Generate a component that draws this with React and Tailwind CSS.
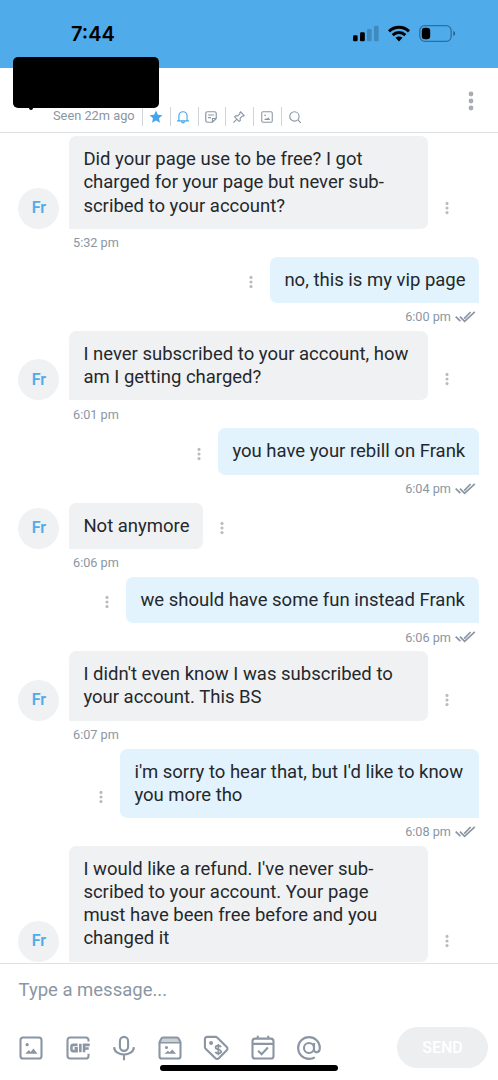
import React from 'react';

const messages = [
  { lines: ['Did your page use to be free? I got', 'charged for your page but never sub-', 'scribed to your account?'], time: '5:32 pm', w: 'w-[359px]' },
  { mine: true, lines: ['no, this is my vip page'], time: '6:00 pm', w: 'w-[209px]' },
  { lines: ['I never subscribed to your account, how', 'am I getting charged?'], time: '6:01 pm', w: 'w-[359px]' },
  { mine: true, lines: ['you have your rebill on Frank'], time: '6:04 pm', w: 'w-[261px]' },
  { lines: ['Not anymore'], time: '6:06 pm', w: 'w-[134px]' },
  { mine: true, lines: ['we should have some fun instead Frank'], time: '6:06 pm', w: 'w-[353px]' },
  { lines: ["I didn't even know I was subscribed to", 'your account. This BS'], time: '6:07 pm', w: 'w-[359px]' },
  { mine: true, lines: ["i'm sorry to hear that, but I'd like to know", 'you more tho'], time: '6:08 pm', w: 'w-[359px]' },
  { lines: ["I would like a refund. I've never sub-", 'scribed to your account. Your page', 'must have been free before and you', 'changed it'], time: '6:10 pm', w: 'w-[359px]', last: true },
];

function Dots({ className }) {
  return (
    <svg viewBox="0 0 4 14" className={className} fill="currentColor">
      <circle cx="2" cy="2.4" r="1.55" />
      <circle cx="2" cy="7" r="1.55" />
      <circle cx="2" cy="11.6" r="1.55" />
    </svg>
  );
}

function Checks() {
  return (
    <svg viewBox="0 0 21 12" className="h-3 w-[21px]" fill="none" stroke="currentColor" strokeWidth="1.7">
      <path d="M.7 5.6 5.4 10.2M5 5.6l4.6 4.700L19.800.8M9.200 7.600 15.600 1" />
    </svg>
  );
}

function Message({ mine, lines, time, w, last }) {
  const dots = <Dots className="mb-[14px] h-[14px] w-1 shrink-0 text-[#b8bcc2]" />;
  return (
    <div className="shrink-0">
      <div className={mine ? 'flex items-end justify-end gap-[17px] pr-[18.600px]' : 'flex items-end gap-[16.600px] pl-[18.400px]'}>
        {mine && dots}
        {!mine && (
          <div className="-mr-[6.600px] flex size-[41px] shrink-0 items-center justify-center rounded-full bg-[#f0f1f3] text-[16px] font-semibold text-[#4faceb]">Fr</div>
        )}
        <div className={`${w} shrink-0 px-[14px] pt-[12.05px] pb-[11.05px] text-[18.5px] leading-[23.15px] whitespace-nowrap text-[#24282c] ${mine ? 'rounded-[7px] rounded-br-none bg-[#e2f3fd]' : 'rounded-[7px] rounded-bl-none bg-[#f0f1f3]'}`}>
          {lines.map((l) => <div key={l}>{l}</div>)}
        </div>
        {!mine && dots}
      </div>
      {!last && (
        <div className={`flex h-[28px] items-center text-[12.7px] text-[#8a96a3] ${mine ? 'justify-end gap-1 pr-[22px]' : 'pl-[73px]'}`}>
          <span>{time}</span>
          {mine && <Checks />}
        </div>
      )}
    </div>
  );
}

function Picture({ className }) {
  return (
    <svg viewBox="0 0 24 24" className={className} fill="none" stroke="currentColor" strokeWidth="1.8">
      <rect x="3" y="3" width="18" height="18" rx="2.2" />
      <circle cx="8.7" cy="9.2" r="1.4" fill="currentColor" stroke="none" />
      <path d="M7 17h10.5l-3.4-4.6-2.4 3-1.5-1.6z" fill="currentColor" stroke="none" />
    </svg>
  );
}

const tool = 'size-[28px]';

export default function App() {
  return (
    <div className="relative flex h-[1080px] w-[498px] flex-col overflow-hidden bg-white font-['Roboto',sans-serif]">
      <div className="flex h-[68px] shrink-0 items-start justify-between bg-[#4fabea] pt-[20px] pr-[42.500px] pl-[71px] text-black">
        <div className="font-['Inter',sans-serif] text-[20px] leading-7 font-semibold">7:44</div>
        <div className="flex items-center gap-[9px] pt-[5px]">
          <svg viewBox="0 0 26 17" className="h-[17px] w-[26px]">
            <rect x="0" y="10.3" width="4.6" height="6" rx="1.3" />
            <rect x="7" y="7.3" width="4.8" height="9" rx="1.3" />
            <rect x="14" y="4" width="4.6" height="12.3" rx="1.3" fill="#3e89bd" />
            <rect x="21" y="0.7" width="4.6" height="15.6" rx="1.3" fill="#3e89bd" />
          </svg>
          <svg viewBox="0 0 22 17" className="h-[17px] w-[22px]" fill="none" stroke="#000" strokeWidth="3">
            <path d="M1 6.3C6.7.9 15.3.9 21 6.3" />
            <path d="M4.7 10.1C8.3 6.7 13.7 6.7 17.3 10.1" />
            <path d="M7.5 12.8c2-1.9 5-1.9 7 0L11 16.4z" fill="#000" stroke="none" />
          </svg>
          <svg viewBox="0 0 37 17" className="h-[17px] w-[37px]">
            <rect x=".8" y=".7" width="31.4" height="15.6" rx="5" fill="none" stroke="#2f6f9d" strokeWidth="1.3" />
            <rect x="2.8" y="2.8" width="8.4" height="11.4" rx="3.3" />
            <path d="M34.4 6c2.2.8 2.2 4.2 0 5z" fill="#235a80" />
          </svg>
        </div>
      </div>

      <div className="relative flex h-[65px] shrink-0 items-end border-b border-[#dfe2e5] pb-[6px] pl-[53px] text-[#8a96a3]">
        <div className="w-[89px] text-[12.8px] leading-[20px] whitespace-nowrap">Seen 22m ago</div>
        <div className="flex h-[19px] items-center [&>div]:flex [&>div]:h-[19px] [&>div]:w-[27.8px] [&>div]:items-center [&>div]:justify-center [&>div]:border-l [&>div]:border-[#cfd4d9] [&>div]:pr-[1.5px]">
          <div>
            <svg viewBox="0 0 24 24" className="size-[14px]" fill="#45a7ea"><path d="m12 1 3.2 7.2 7.8.8-5.8 5.2 1.6 7.8L12 18l-6.8 4 1.6-7.8L1 9l7.8-.8z" /></svg>
          </div>
          <div>
            <svg viewBox="0 0 24 24" className="size-[14px] text-[#45a7ea]" fill="none" stroke="currentColor" strokeWidth="2"><path d="M5 18v-8a7 7 0 0 1 14 0v8M1.8 18.5h20.4M9.5 20c.5 2.7 4.5 2.7 5 0" /></svg>
          </div>
          <div>
            <svg viewBox="0 0 24 24" className="size-[14px]" fill="none" stroke="currentColor" strokeWidth="2"><path d="M14.5 21H6a3 3 0 0 1-3-3V6a3 3 0 0 1 3-3h12a3 3 0 0 1 3 3v8.5zM14.5 21v-6.5H21M7 8.5h10M7 13h5" /></svg>
          </div>
          <div>
            <svg viewBox="0 0 24 24" className="size-[14px]" fill="none" stroke="currentColor" strokeWidth="1.9" strokeLinejoin="round"><path d="m14.5 3 6.5 6.5-2 1.2-1.5-.2-3.5 3.5.2 4-2 1.5-7.700-7.700L6 9.800l4 .2 3.500-3.500-.2-1.500zM8 16l-5.500 5.500" /></svg>
          </div>
          <div><Picture className="size-[14px]" /></div>
          <div>
            <svg viewBox="0 0 24 24" className="size-[14px]" fill="none" stroke="currentColor" strokeWidth="1.9"><circle cx="11" cy="11" r="8" /><path d="m17 17 5 5" /></svg>
          </div>
        </div>
        <svg viewBox="0 0 6 20" className="absolute top-[23px] right-[24px] h-5 w-1.5" fill="#a8adb3">
          <circle cx="3" cy="3" r="2.4" /><circle cx="3" cy="10" r="2.4" /><circle cx="3" cy="17" r="2.4" />
        </svg>
        <div className="absolute top-[-11px] left-[12.5px] h-[51px] w-[146.5px] rounded-[5px] bg-black" />
        <div className="absolute top-[38px] left-[29px] h-[4px] w-[4px] rounded-full bg-black" />
      </div>

      <div className="flex h-[830px] shrink-0 flex-col overflow-hidden pt-[3.2px]">
        {messages.map((m, i) => <Message key={i} {...m} />)}
      </div>

      <div className="flex flex-1 flex-col border-t border-[#dfe2e5] text-[#8a96a3]">
        <div className="pt-[14px] pl-[18.500px] text-[18.500px] leading-6">Type a message...</div>
        <div className="flex items-center justify-between pt-[25px] pr-[10px] pl-[17.300px]">
          <div className="flex items-center gap-[18.300px]">
            <Picture className={tool} />
            <svg viewBox="0 0 24 24" className={tool} fill="none" stroke="currentColor" strokeWidth="1.8">
              <path d="M21 6.5V5.200A2.200 2.200 0 0 0 18.800 3H5.200A2.200 2.200 0 0 0 3 5.200v13.600A2.200 2.200 0 0 0 5.200 21h13.600a2.200 2.200 0 0 0 2.200-2.200V17" />
              <path d="M11.600 9.300H8Q6.400 9.300 6.400 10.900v2.200q0 1.600 1.600 1.600h2.800v-2.500H9M14 8.300v7.400M17.200 15.700V9.300h4.800M17.200 12.500h4" strokeWidth="2.200" />
            </svg>
            <svg viewBox="0 0 24 24" className={tool} fill="none" stroke="currentColor" strokeWidth="1.8">
              <rect x="8.5" y="2.500" width="7" height="12" rx="3.500" />
              <path d="M3.500 11.200c.6 8.600 16.400 8.600 17 0M12 17.700v4.700" />
            </svg>
            <svg viewBox="0 0 24 24" className={tool} fill="none" stroke="currentColor" strokeWidth="1.8">
              <path d="M3 7.500h18L19.500 4.200Q19 3 17.800 3H6.200Q5 3 4.500 4.200z" fill="#cbd1d7" stroke="none" />
              <path d="M3 7.500h18" strokeWidth="1.300" />
              <path d="M3 7v12a2 2 0 0 0 2 2h14a2 2 0 0 0 2-2V7l-1.400-2.800A2 2 0 0 0 17.800 3H6.200a2 2 0 0 0-1.800 1.200z" />
              <circle cx="9" cy="11.500" r="1.300" fill="currentColor" stroke="none" />
              <path d="M7.200 17h10l-3.200-3.800-2.300 2.500-1.500-1.300z" fill="currentColor" stroke="none" />
            </svg>
            <svg viewBox="0 0 24 24" className={tool} fill="none" stroke="currentColor" strokeWidth="1.8" strokeLinejoin="round">
              <path d="M2.500 4.500a2 2 0 0 1 2-2h7.100a2 2 0 0 1 1.400.6l8.200 8a2 2 0 0 1 0 2.900l-6.800 6.800a2 2 0 0 1-2.900 0l-8.400-8.200a2 2 0 0 1-.6-1.400z" />
              <circle cx="7.800" cy="7.700" r="1.700" fill="currentColor" stroke="none" />
              <path d="M16.200 11.200c-.7-1.700-4.600-1.600-4.600.4 0 2.200 4.800 1.200 4.800 3.500 0 2-4.200 2.200-4.900.2M14 8.500v9.800" strokeWidth="1.500" />
            </svg>
            <svg viewBox="0 0 24 24" className={tool} fill="none" stroke="currentColor" strokeWidth="1.8">
              <rect x="3" y="4" width="18" height="17" rx="2.200" />
              <path d="M3 8.500h18M7.500 1.500V4M16.500 1.500V4M7.800 14.300l3 3 5.400-5.700" />
            </svg>
            <svg viewBox="0 0 24 24" className={tool} fill="none" stroke="currentColor" strokeWidth="1.8">
              <circle cx="12" cy="12" r="4.300" />
              <path d="M16.300 7.700v5.500c0 3.800 5 3.200 5-1.200A9.300 9.300 0 1 0 12 21.300c1.900 0 3.600-.4 5-1.200" />
            </svg>
          </div>
          <button className="h-[41px] w-[91px] rounded-full bg-[#edeef0] text-[16px] font-medium text-white">SEND</button>
        </div>
      </div>
      <div className="absolute top-[1065px] left-[160px] h-[6px] w-[178px] rounded-full bg-black" />
    </div>
  );
}
